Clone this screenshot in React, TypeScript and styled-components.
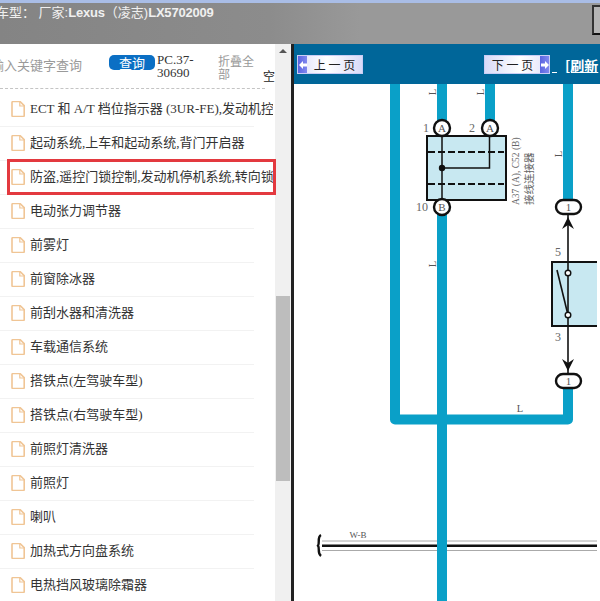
import styled, { createGlobalStyle } from 'styled-components';

const GlobalStyle = createGlobalStyle`
    html, body {
        margin: 0;
        padding: 0;
        background: #fff;
    }
    #root {
        width: 600px;
        height: 601px;
        overflow: hidden;
    }
`;

const CJK = `"Liberation Serif", "Noto Sans CJK SC", serif`;

const Page = styled.div`
    width: 600px;
    height: 601px;
    display: flex;
    flex-direction: column;
    overflow: hidden;
    font-family: ${CJK};
`;

const Header = styled.header`
    height: 44px;
    flex: none;
    box-sizing: border-box;
    border-top: 3px solid #a9bde6;
    background: linear-gradient(90deg, #848484 0%, #8c8c8c 45%, #999 60%, #999 100%);
    display: flex;
    justify-content: space-between;
    overflow: hidden;
`;

const CarTitle = styled.div`
    margin: 0 0 0 -4px;
    color: #f0f0f0;
    font: 13px/19px "Liberation Sans", "Noto Sans CJK SC", sans-serif;
    white-space: pre;
`;

const Latin = styled.span`
    font-weight: bold;
    letter-spacing: -0.2px;
`;

const CornerButton = styled.div`
    width: 8px;
    height: 30px;
    margin-top: 2px;
    box-sizing: border-box;
    background: #b5b5b5;
    border: 2px solid #333;
    border-right: none;
    border-bottom-color: #111;
`;

const Body = styled.div`
    flex: 1;
    display: flex;
    min-height: 0;
`;

const Sidebar = styled.aside`
    width: 275px;
    flex: none;
    overflow: hidden;
    background: #fff;
`;

const SearchRow = styled.div`
    width: 265px;
    height: 45px;
    box-sizing: border-box;
    display: flex;
    align-items: flex-start;
    border-bottom: 1px dashed #c4c4c4;
`;

const Keyword = styled.span`
    width: 131px;
    flex: none;
    margin: 12px 0 0 -22px;
    color: #9a9a9a;
    font: 13px/17px "Noto Sans CJK SC", sans-serif;
    white-space: nowrap;
`;

const QueryButton = styled.span`
    width: 46px;
    height: 15px;
    flex: none;
    margin-top: 11px;
    border-radius: 5px;
    background: #0b6fc4;
    color: #fff;
    text-align: center;
    font: 13px/15px "Noto Sans CJK SC", sans-serif;
`;

const PartNo = styled.span`
    width: 48px;
    flex: none;
    margin: 9px 0 0 2px;
    color: #333;
    font: 13px/13px "Liberation Serif", serif;
`;

const Collapse = styled.span`
    width: 40px;
    flex: none;
    margin: 10px 0 0 13px;
    color: #999;
    font: 12px/13px "Noto Sans CJK SC", sans-serif;
`;

const Clear = styled.span`
    flex: none;
    margin: 25px -12px 0 5px;
    color: #222;
    font: 12px/14px "Noto Sans CJK SC", sans-serif;
`;

const List = styled.ul`
    list-style: none;
    margin: 4px 0 0;
    padding: 0;
`;

const Row = styled.li`
    position: relative;
    width: 273px;
    height: 34px;
    display: flex;
    align-items: center;
    gap: 5px;
    padding: 0 0 2px 11px;
    box-sizing: border-box;
    overflow: hidden;
    color: #333;
    font: 13px/16px ${CJK};
    white-space: nowrap;

    &::after {
        content: '';
        position: absolute;
        left: 0;
        bottom: 0;
        width: 254px;
        height: 1px;
        background: #f2f2f2;
    }
`;

const Marker = styled.div`
    position: absolute;
    left: 7px;
    top: 115px;
    width: 269px;
    height: 36px;
    box-sizing: border-box;
    border: 3px solid #e3393f;
    pointer-events: none;
`;

const SidebarWrap = styled.div`
    position: relative;
    display: flex;
    flex: none;
`;

const ScrollTrack = styled.div`
    width: 16px;
    flex: none;
    background: #f0f0f0;
    display: flex;
    flex-direction: column;
    align-items: center;
    padding-top: 5px;
    box-sizing: border-box;
`;

const ScrollArrow = styled.div`
    width: 0;
    height: 0;
    border-left: 4px solid transparent;
    border-right: 4px solid transparent;
    border-bottom: 4px solid #555;
`;

const ScrollThumb = styled.div`
    width: 14px;
    height: 185px;
    margin-top: 243px;
    background: #bdbdbd;
`;

const Main = styled.main`
    flex: 1;
    min-width: 0;
    display: flex;
    flex-direction: column;
    border-left: 3px solid #222;
    overflow: hidden;
`;

const NavBar = styled.nav`
    height: 40px;
    flex: none;
    background: #006699;
    display: flex;
    align-items: flex-start;
    padding: 11px 0 0 3px;
    box-sizing: border-box;
    white-space: nowrap;
`;

const PageButton = styled.div<{ $next?: boolean }>`
    width: 66px;
    height: 19px;
    flex: none;
    box-sizing: border-box;
    display: flex;
    flex-direction: ${(p) => (p.$next ? 'row-reverse' : 'row')};
    align-items: center;
    margin-left: ${(p) => (p.$next ? '121px' : '0')};
    border: 1px solid #c9cdf5;
    background: ${(p) =>
        p.$next
            ? 'linear-gradient(90deg, #d9dbf8, #fff 55%, #dfe0fa)'
            : 'linear-gradient(90deg, #dfe0fa, #fff 45%, #d9dbf8)'};
    color: #222;
    font: 12px/17px "Noto Sans CJK SC", sans-serif;
`;

const ArrowBox = styled.span`
    width: 9px;
    height: 17px;
    flex: none;
    background: linear-gradient(90deg, #5a64e0, #8088ee);
    display: flex;
    align-items: center;
    justify-content: center;
`;

const ButtonLabel = styled.span`
    flex: 1;
    text-align: center;
`;

const Gap = styled.span`
    width: 5px;
    height: 17px;
    margin-left: 2px;
    flex: none;
    border-bottom: 1px solid #fff;
`;

const Refresh = styled.span`
    margin: 1px 0 0 8px;
    color: #fff;
    font: bold 14px/18px "Noto Sans CJK SC", sans-serif;
    text-decoration: underline;
`;

const Diagram = styled.svg`
    display: block;
    flex: none;
    width: 303px;
    height: 517px;
    background: #fff;
`;

const items = [
    'ECT 和 A/T 档位指示器 (3UR-FE),发动机控制',
    '起动系统,上车和起动系统,背门开启器',
    '防盗,遥控门锁控制,发动机停机系统,转向锁',
    '电动张力调节器',
    '前雾灯',
    '前窗除冰器',
    '前刮水器和清洗器',
    '车载通信系统',
    '搭铁点(左驾驶车型)',
    '搭铁点(右驾驶车型)',
    '前照灯清洗器',
    '前照灯',
    '喇叭',
    '加热式方向盘系统',
    '电热挡风玻璃除霜器',
];

function FileIcon() {
    return (
        <svg width="14" height="16" viewBox="0 0 14 16" style={{ flex: 'none' }}>
            <path
                d="M1 1.5 a1 1 0 0 1 1-1 H9 L13.2 4.7 V14.5 a1 1 0 0 1-1 1 H2 a1 1 0 0 1-1-1 Z"
                fill="#fff"
                stroke="#f0c595"
                strokeWidth="1.6"
            />
            <path d="M8.8 .8 V5 H13" fill="none" stroke="#f0c595" strokeWidth="1.2" />
        </svg>
    );
}

function Pin({ x, y, label, num, numX }: { x: number; y: number; label: string; num: string; numX: number }) {
    return (
        <g>
            <circle cx={x} cy={y} r="8" fill="#fff" stroke="#111" strokeWidth="2.4" />
            <text x={x} y={y + 4} textAnchor="middle" fontSize="11" fill="#555" fontFamily="Liberation Serif">
                {label}
            </text>
            <text x={numX} y={y + 4} textAnchor="middle" fontSize="12" fill="#666" fontFamily="Liberation Serif">
                {num}
            </text>
        </g>
    );
}

function Plug({ y }: { y: number }) {
    return (
        <g>
            <rect x="556" y={y - 7} width="25" height="14" rx="7" fill="#fff" stroke="#111" strokeWidth="2.4" />
            <text x="568.5" y={y + 4} textAnchor="middle" fontSize="11" fill="#555" fontFamily="Liberation Serif">
                1
            </text>
        </g>
    );
}

function WireLabel({ x, y, rotate }: { x: number; y: number; rotate?: boolean }) {
    return (
        <text
            x={x}
            y={y}
            fontSize="10.5"
            fill="#555"
            textAnchor="middle"
            fontFamily="Liberation Serif"
            transform={rotate ? `rotate(-90 ${x} ${y})` : undefined}
        >
            L
        </text>
    );
}

function WiringDiagram() {
    const wire = '#0aa0c8';
    return (
        <Diagram viewBox="294 84 303 517" aria-label="wiring diagram">
            {/* wires */}
            <path
                d="M395 84 V419.5 H568 V381 M568 207 V84"
                fill="none"
                stroke={wire}
                strokeWidth="10"
                strokeLinejoin="round"
            />
            <path d="M490 84 V128" stroke={wire} strokeWidth="10" />

            {/* W-B wire */}
            <path d="M322 541 H600 M322 550.5 H600" stroke="#aaa" strokeWidth="1" />
            <path d="M322 545.7 H600" stroke="#111" strokeWidth="2.5" />
            <path
                d="M321 535 C317 537 320 543 318 545.7 C320 548 317 553 321 556"
                fill="none"
                stroke="#111"
                strokeWidth="2.4"
            />
            <path d="M600 536 V556" stroke="#111" strokeWidth="3" />
            <text x="358" y="538" textAnchor="middle" fontSize="9" fill="#555" fontFamily="Liberation Serif">
                W-B
            </text>
            <path d="M442 84 V601" stroke={wire} strokeWidth="10" />

            {/* junction connector */}
            <rect x="427" y="136" width="79" height="64" fill="#c8e8f1" stroke="#111" strokeWidth="2" />
            <path d="M428 152 H504 M428 184 H504" stroke="#111" strokeWidth="2" strokeDasharray="7 3" />
            <path d="M442 128 V207 M442 168 H489.5 V128" fill="none" stroke="#111" strokeWidth="1.5" />
            <circle cx="442" cy="168" r="3.2" fill="#111" />
            <Pin x={442} y={128} label="A" num="1" numX={426} />
            <Pin x={490} y={128} label="A" num="2" numX={472} />
            <Pin x={442} y={207} label="B" num="10" numX={422} />
            <text
                x="519"
                y="205"
                fontSize="9.5"
                fill="#666"
                fontFamily="Liberation Serif"
                transform="rotate(-90 519 205)"
            >
                A37 (A), C52 (B)
            </text>
            <text
                x="533"
                y="205"
                fontSize="10.5"
                fill="#666"
                fontFamily="Noto Sans CJK SC"
                transform="rotate(-90 533 205)"
            >
                接线连接器
            </text>

            {/* switch */}
            <rect x="552" y="262" width="60" height="64" fill="#c8e8f1" stroke="#111" strokeWidth="2" />
            <path d="M568 214 V373" stroke="#111" strokeWidth="1.6" />
            <path d="M568 217 L574 229 L568 225 L562 229 Z" fill="#111" />
            <path d="M568 371 L574 359 L568 363 L562 359 Z" fill="#111" />
            <path d="M557 270 L568 315" stroke="#111" strokeWidth="1.6" />
            <circle cx="568" cy="273" r="2.8" fill="#fff" stroke="#111" strokeWidth="1.4" />
            <circle cx="568" cy="315" r="2.8" fill="#fff" stroke="#111" strokeWidth="1.4" />
            <Plug y={207} />
            <Plug y={381} />
            <text x="558" y="256" textAnchor="middle" fontSize="12" fill="#666" fontFamily="Liberation Serif">5</text>
            <text x="558" y="341" textAnchor="middle" fontSize="12" fill="#666" fontFamily="Liberation Serif">3</text>

            <WireLabel x={436} y={92} rotate />
            <WireLabel x={484} y={92} rotate />
            <WireLabel x={562} y={154} rotate />
            <WireLabel x={436} y={264} rotate />
            <WireLabel x={520} y={412} />
        </Diagram>
    );
}

function App() {
    return (
        <Page>
            <GlobalStyle />
            <Header>
                <CarTitle>
                    车型： 厂家:<Latin>Lexus</Latin>（凌志)<Latin>LX5702009</Latin>
                </CarTitle>
                <CornerButton />
            </Header>
            <Body>
                <SidebarWrap>
                    <Sidebar>
                        <SearchRow>
                            <Keyword>请输入关键字查询</Keyword>
                            <QueryButton>查询</QueryButton>
                            <PartNo>PC.37-30690</PartNo>
                            <Collapse>折叠全部</Collapse>
                            <Clear>空</Clear>
                        </SearchRow>
                        <List>
                            {items.map((item) => (
                                <Row key={item}>
                                    <FileIcon />
                                    {item}
                                </Row>
                            ))}
                        </List>
                    </Sidebar>
                    <ScrollTrack>
                        <ScrollArrow />
                        <ScrollThumb />
                    </ScrollTrack>
                    <Marker />
                </SidebarWrap>
                <Main>
                    <NavBar>
                        <PageButton>
                            <ArrowBox>
                                <svg width="8" height="8" viewBox="0 0 8 8">
                                    <path d="M0 4 L4 0 V2.4 H8 V5.6 H4 V8 Z" fill="#fff" />
                                </svg>
                            </ArrowBox>
                            <ButtonLabel>上 一 页</ButtonLabel>
                        </PageButton>
                        <PageButton $next>
                            <ArrowBox>
                                <svg width="8" height="8" viewBox="0 0 8 8">
                                    <path d="M8 4 L4 0 V2.4 H0 V5.6 H4 V8 Z" fill="#fff" />
                                </svg>
                            </ArrowBox>
                            <ButtonLabel>下 一 页</ButtonLabel>
                        </PageButton>
                        <Gap />
                        <Refresh>[刷新</Refresh>
                    </NavBar>
                    <WiringDiagram />
                </Main>
            </Body>
        </Page>
    );
}

export default App;
